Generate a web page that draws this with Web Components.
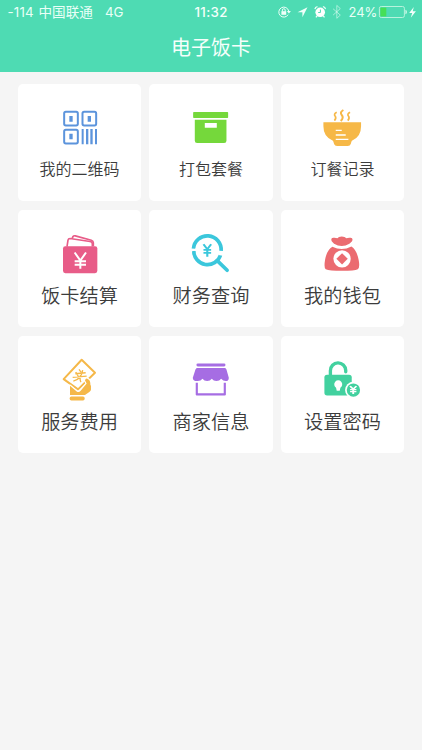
<!DOCTYPE html>
<html lang="zh-CN">
<head>
<meta charset="utf-8">
<title>电子饭卡</title>
<style>
body{margin:0;background:#f5f5f5;font-family:Inter,"Noto Sans CJK SC",sans-serif;color:#3c3c3c}
</style>
</head>
<body>
<meal-app></meal-app>
<script>
const define=(name,html)=>customElements.define(name,class extends HTMLElement{
  constructor(){super();const t=document.createElement('template');t.innerHTML=html;
    this.attachShadow({mode:'open'}).append(t.content.cloneNode(true));}
});

define('status-bar',`<style>
:host{display:flex;align-items:center;height:24px;color:#e9fff7;font-size:13.3px;line-height:24px;white-space:nowrap}
span{display:block;flex:none}
.sig{width:31px;padding-left:7.5px;letter-spacing:.2px}.op{width:66.5px;font-size:13.6px}.net{width:89.5px}
.time{width:82px;font-weight:500;font-size:13.3px;letter-spacing:.35px;color:#f4fffb}.pct{width:29.5px;font-size:13px}
svg{display:block;flex:none}
.icons{width:72px;height:24px}.bat{width:44px;height:24px}
</style>
<span class="sig">-114</span><span class="op">中国联通</span><span class="net">4G</span><span class="time">11:32</span>
<svg class="icons" viewBox="276.5 0 72 24" fill="none" stroke="#effff9">
  <path d="M287.6 14.7a5 5 0 1 1 .6-3.7" stroke-width="1"/><path d="M286.4 11h4l-2 2.500z" fill="#effff9" stroke="none"/>
  <rect x="280.9" y="11.2" width="4.8" height="3.6" fill="#effff9" stroke="none"/><path d="M281.9 11.5v-1.4a1.4 1.4 0 0 1 2.8 0v1.4"/>
  <path d="M307 7.2 297 12.3h4.9v5z" fill="#effff9" stroke="none"/>
  <circle cx="319.7" cy="12.3" r="4.8" fill="#fff" stroke="none"/><path d="M314.4 9.1a3 3 0 0 1 2.6-2.5M322.4 6.6a3 3 0 0 1 2.6 2.5M316.6 15.8l-1.2 1.5M322.8 15.8l1.2 1.5" stroke-width="1.3"/>
  <path d="M319.9 9.5v3h-2.2" stroke="#4edbb3"/>
  <path d="m332.6 8.8 7.2 6.3-3.5 3.2V5.4l3.5 3.2-7.2 6.5" opacity=".55"/>
</svg>
<span class="pct">24%</span>
<svg class="bat" viewBox="378 0 44 24">
  <rect x="379.4" y="6.5" width="25" height="11" rx="1.8" fill="none" stroke="#b8f3dd"/>
  <path d="M380.4 7.6h5.9v8.8h-5.9z" fill="#45df57"/><path d="M405.4 9.8q1.6.4 1.6 2.2t-1.6 2.2z" fill="#c9f8e8"/>
  <path d="m413.8 7-4.600 6h3l-1.4 4.7 5.1-6.4h-3.2z" fill="#f4fffb"/>
</svg>`);

define('app-header',`<style>
:host{display:flex;flex-direction:column;height:72px;background:#4edbb3;color:#fff}
h1{margin:0;padding-top:7px;font:400 20px/32px "Noto Sans CJK SC",sans-serif;text-align:center;color:#f5fffb}
</style><status-bar></status-bar><h1><slot></slot></h1>`);

const yen='<path d="m0 0 10 15L20 0M10 15v23M0 17h20M0 26h20"/>';
const icons={
qr:['24 12','#5c94dc',`<g fill="none" stroke="currentColor" stroke-width="6"><rect x="162.500" y="95.500" width="41" height="41" rx="5"/><rect x="217.500" y="95.500" width="41" height="41" rx="5"/><rect x="162.500" y="149.500" width="41" height="41" rx="5"/></g><path d="M178 108h10v17h-10zM233 108h10v17h-10zM178 161h10v17h-10zM215 147h6v46h-6zM228 147h7v46h-7zM241 147h7v46h-7zM255 147h6v46h-6z"/>`],
box:['12.6 12','#75d83b',`<rect x="145" y="96" width="105" height="18" rx="2"/><path fill-rule="evenodd" d="M150 119h95v63q0 7-7 7h-81q-7 0-7-7zM180 129v14h36v-14z"/>`],
bowl:['16.8 12','#f6b847',`<path d="M144 127h113v12q0 30-25 42-3 1-4 4l-2 7q-2 6-9 6h-32q-7 0-9-6l-2-7q-1-3-4-4-26-12-26-42z"/><g fill="none" stroke="currentColor" stroke-width="5"><path d="M184 97q-10 5-5 11t-2 14M224 97q-10 5-5 11t-2 14"/><path stroke-width="6" d="M204 90q-12 7-5 15t-3 18"/></g><path d="M181 151h18M181 165h30M181 178h38" stroke="#fff" stroke-width="4"/>`],
wallet:['24 14.4','#e85c88',`<rect x="159" y="123" width="103" height="81" rx="7"/><g fill="none" stroke="currentColor" stroke-width="5"><path d="M171 124l3-19q1-5 6-5l60 9q7 1 7 7v8"/><path d="M186 100l3-6q2-3 7-2l48 13q6 2 6 8v10"/></g><path d="m194 142 17 24 17-24M211 166v25M194 168h34M194 179h34" fill="none" stroke="#fff" stroke-width="6"/>`],
search:['12.6 14.400','#3bc7dc',`<g fill="none" stroke="currentColor"><path d="M146 130a41 41 0 0 1 83 7" stroke-width="11"/><path d="M147 137a41 41 0 0 0 80 13" stroke-width="11"/><path d="m218 167 29 28" stroke-width="11" stroke-linecap="round"/><g stroke-width="5.500" transform="translate(176 117) scale(1.15 1)">${yen}</g></g><path d="m140 137 14-5M224 149l14-6" stroke="#fff" stroke-width="4"/>`],
bag:['16.8 14.4','#eb6b70',`<path d="M176 116l-7-8q-4-9 4-10 7-1 13 1 3-5 13-5t14 5q6-2 13-1 8 1 4 10l-8 8q-23 13-46 0zM171 125q29 14 57-1 16 10 22 41 4 23-3 27-9 5-47 5t-49-5q-6-4-2-28 5-29 22-39z"/><circle cx="200" cy="161" r="26" fill="#fff"/><path d="m200 144 17 17-17 17-17-17z"/>`],
hand:['24 16.8','#f5b849',`<path d="M215 88 255 127 204 177 161 146z" fill="none" stroke="currentColor" stroke-width="6" stroke-linejoin="round"/><path d="m180 166 21 18q6 3 11-3l18-22-5-9q2-8 9-4 7 4 7 12-1 4 2 9v10q0 4-5 8l-13 9h-45z" stroke="#fff" stroke-width="7" stroke-linejoin="round"/><path d="m180 166 21 18q6 3 11-3l18-22-5-9q2-8 9-4 7 4 7 12-1 4 2 9v10q0 4-5 8l-13 9h-45z"/><rect x="179" y="198" width="45" height="12" rx="5"/><path d="M207 117l6 8M196 130l31-3M188 141l42-4M218 119q-3 26-28 33M211 135q-2 15 2 20M197 125l8 13" fill="none" stroke="currentColor" stroke-width="4"/>`],
shop:['12.6 16.8','#a66de3',`<rect x="155" y="99" width="87" height="9" rx="4"/><path d="M158 113h81q4 0 6 4l7 25q0 10-9 10-8 0-14-7-5 7-14 7t-14-7q-5 7-14 7t-14-7q-5 7-14 7-15 1-15-10l8-25q2-4 6-4z"/><path d="M156 157v35h84v-35" fill="none" stroke="currentColor" stroke-width="6.500" stroke-linejoin="round"/>`],
lock:['16.8 16.8','#42d19f',`<path d="M165 137v-16a23 23 0 0 1 46-1v4" fill="none" stroke="currentColor" stroke-width="10" stroke-linecap="round"/><rect x="147" y="133" width="82" height="62" rx="8"/><path d="M184 181l-2-9a12 12 0 1 1 13 0l-2 9z" fill="#fff"/><circle cx="234" cy="179" r="25" fill="#fff"/><circle cx="234" cy="179" r="20"/><g fill="none" stroke="#fff" stroke-width="6" transform="translate(224 167) scale(.95 .63)">${yen}</g>`]
};
customElements.define('menu-icon',class extends HTMLElement{
  connectedCallback(){
    const [origin,color,art]=icons[this.getAttribute('name')];
    this.attachShadow({mode:'open'}).innerHTML=`<style>:host{display:block;width:123px;height:70px;color:${color}}svg{display:block}</style><svg width="123" height="70" viewBox="${origin} 369 210" fill="currentColor">${art}</svg>`;
  }
});
customElements.define('menu-card',class extends HTMLElement{
  connectedCallback(){
    this.attachShadow({mode:'open'}).innerHTML=`<style>
:host{display:block;box-sizing:border-box;background:#fff;border-radius:5px;overflow:hidden}
div{text-align:center;font:350 19.2px/30px "Noto Sans CJK SC",sans-serif;white-space:nowrap}
:host([small]) div{font-size:16px;line-height:28px}
</style><menu-icon name="${this.getAttribute('icon')}"></menu-icon><div><slot></slot></div>`;
  }
});
define('menu-grid',`<style>:host{display:grid;grid-template-columns:repeat(3,1fr);grid-auto-rows:117px;gap:8.8px 8.4px;padding:12px 18px 0}</style><slot></slot>`);
define('meal-app',`<style>:host{display:flex;flex-direction:column;width:422px;height:750px;overflow:hidden}</style>
<app-header>电子饭卡</app-header>
<menu-grid>
<menu-card small icon="qr">我的二维码</menu-card><menu-card small icon="box">打包套餐</menu-card><menu-card small icon="bowl">订餐记录</menu-card>
<menu-card icon="wallet">饭卡结算</menu-card><menu-card icon="search">财务查询</menu-card><menu-card icon="bag">我的钱包</menu-card>
<menu-card icon="hand">服务费用</menu-card><menu-card icon="shop">商家信息</menu-card><menu-card icon="lock">设置密码</menu-card>
</menu-grid>`);
</script>
</body>
</html>
